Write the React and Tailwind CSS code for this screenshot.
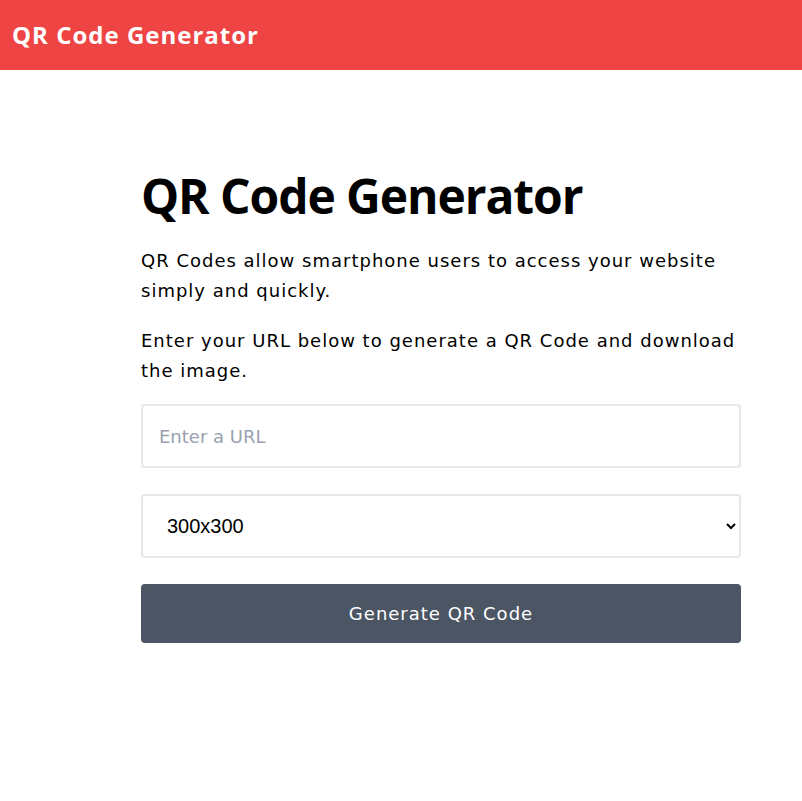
export default function App() {
  const body = { fontFamily: '"DejaVu Sans", "Noto Sans", sans-serif' };
  const head = { fontFamily: '"Open Sans", "Noto Sans", sans-serif' };
  return (
    <div className="min-h-[801px] bg-white" style={body}>
      <header className="h-[70px] bg-[#ef4444] flex items-center px-3">
        <h1 className="text-white text-[24px] font-bold tracking-[1px]" style={head}>QR Code Generator</h1>
      </header>
      <main className="pl-[141px] pr-[61px] pt-[98px]">
        <h2 className="text-[48px] font-bold leading-[56px] text-black tracking-[-1.1px]" style={head}>QR Code Generator</h2>
        <p className="mt-[22px] text-[18px] leading-[30px] text-black tracking-[1px]">
          QR Codes allow smartphone users to access your website simply and quickly.
        </p>
        <p className="mt-[20px] text-[18px] leading-[30px] text-black tracking-[1px]">
          Enter your URL below to generate a QR Code and download the image.
        </p>
        <div className="mt-[18px] flex flex-col">
          <input
            type="text"
            placeholder="Enter a URL"
            className="h-[64px] w-full border-2 border-gray-200 rounded px-4 text-[18px] placeholder:text-gray-400 outline-none"
          />
          <select
            className="mt-[26px] h-[64px] w-full border-2 border-gray-200 rounded pl-[20px] pr-[26px] text-[20px] bg-white outline-none"
            style={{ fontFamily: '"Liberation Sans", Arial, sans-serif' }}
            defaultValue="300"
          >
            <option value="100">100x100</option>
            <option value="200">200x200</option>
            <option value="300">300x300</option>
            <option value="400">400x400</option>
          </select>
          <button className="mt-[26px] h-[59px] w-full bg-[#4b5563] text-white text-[18px] rounded tracking-[1px]">
            Generate QR Code
          </button>
        </div>
      </main>
    </div>
  );
}
